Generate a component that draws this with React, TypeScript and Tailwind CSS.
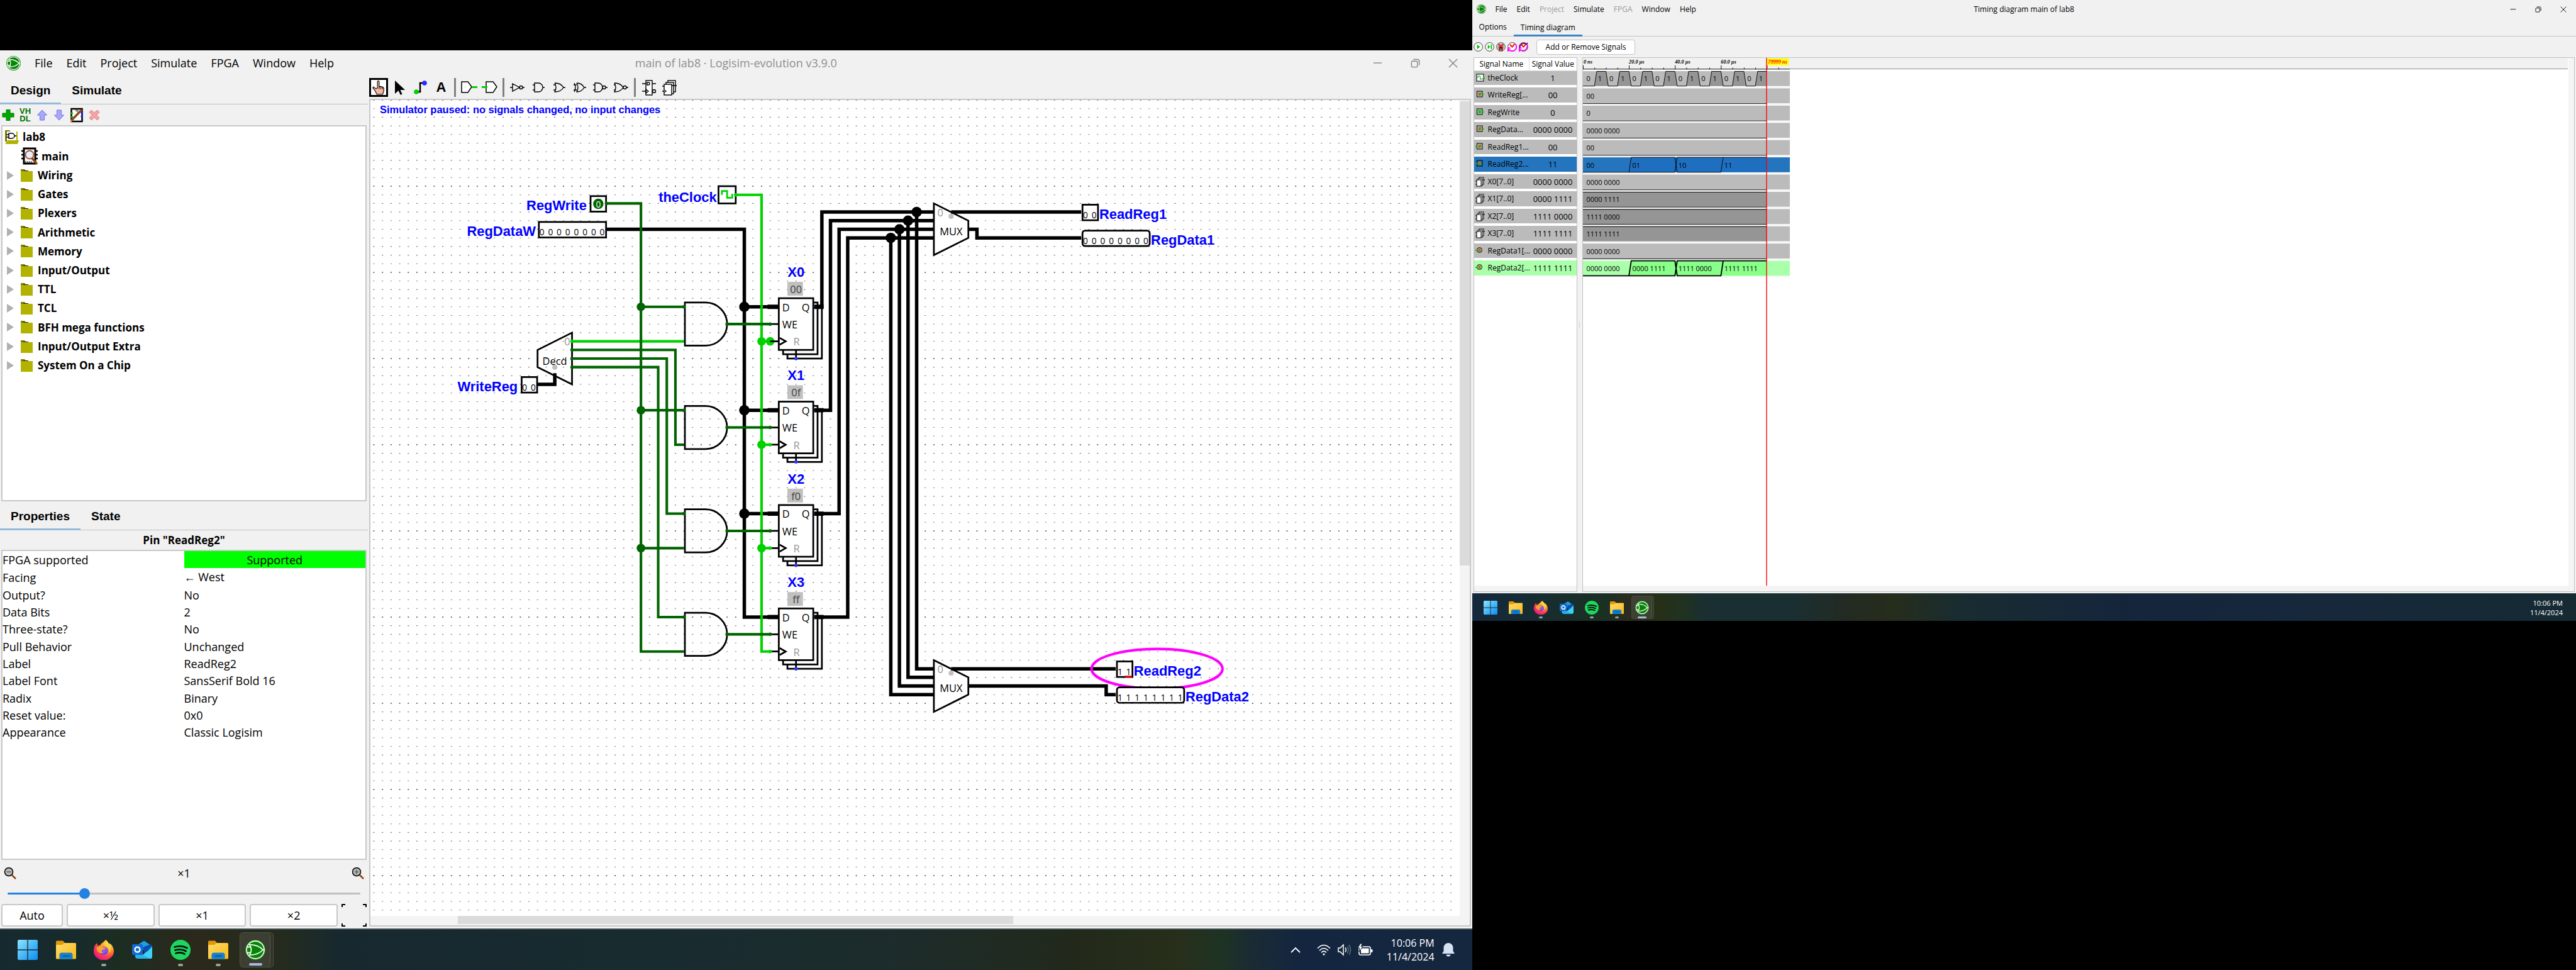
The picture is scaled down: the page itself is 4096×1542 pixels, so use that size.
import React from 'react';

/* ---------- shared icons ---------- */

function LogisimLogo({ className }: { className: string }) {
  return (
    <svg viewBox="0 0 32 32" className={className} aria-hidden="true">
      <circle cx="16" cy="16" r="16" fill="#128a12" />
      <circle cx="16" cy="16" r="14" fill="#078407" stroke="#e9f5e6" strokeWidth="1.8" />
      <path d="M7 8 Q12 16 7 24 Q20 24.5 28 16 Q20 7.5 7 8 Z M2 11.5 H8 M2 20.5 H8 M28 16 H31" fill="none" stroke="#f2faf0" strokeWidth="1.8" />
    </svg>
  );
}

function WindowsIcon({ className }: { className: string }) {
  return (
    <svg viewBox="0 0 32 32" className={className} aria-hidden="true">
      <defs>
        <linearGradient id="winGrad" x1="0" y1="0" x2="1" y2="1">
          <stop offset="0" stopColor="#8be4ff" />
          <stop offset="1" stopColor="#0a8df0" />
        </linearGradient>
      </defs>
      <path d="M0 2a2 2 0 0 1 2-2h13.3v15.3H0z M16.7 0H30a2 2 0 0 1 2 2v13.3H16.7z M0 16.7h15.3V32H2a2 2 0 0 1-2-2z M16.7 16.7H32V30a2 2 0 0 1-2 2H16.7z" fill="url(#winGrad)" />
    </svg>
  );
}

function ExplorerIcon({ className }: { className: string }) {
  return (
    <svg viewBox="0 0 32 32" className={className} aria-hidden="true">
      <defs>
        <linearGradient id="foldGrad" x1="0" y1="0" x2="1" y2="1">
          <stop offset="0" stopColor="#ffdc6b" />
          <stop offset="1" stopColor="#fbb915" />
        </linearGradient>
      </defs>
      <path d="M0 3a1.500 1.500 0 0 1 1.500-1.500H11L14 5V12H0z" fill="#e09a08" />
      <path d="M0 8H10L13.500 5H30.500A1.500 1.500 0 0 1 32 6.500V29A1.500 1.500 0 0 1 30.500 30.500H1.500A1.500 1.500 0 0 1 0 29z" fill="url(#foldGrad)" />
      <path d="M5.500 30.500V24a3.500 3.500 0 0 1 3.500-3.500H23a3.500 3.500 0 0 1 3.500 3.500V30.500z" fill="#1481cf" />
      <rect x="10.500" y="25" width="11" height="1.600" rx="0.800" fill="#0a4f86" />
    </svg>
  );
}

function FirefoxIcon({ className }: { className: string }) {
  return (
    <svg viewBox="0 0 32 32" className={className} aria-hidden="true">
      <defs>
        <radialGradient id="ffGrad" cx="0.75" cy="0.15" r="0.95">
          <stop offset="0" stopColor="#fff44f" />
          <stop offset="0.4" stopColor="#ff9a26" />
          <stop offset="0.7" stopColor="#ff4050" />
          <stop offset="1" stopColor="#e31587" />
        </radialGradient>
        <radialGradient id="ffCore" cx="0.5" cy="0.4" r="0.7">
          <stop offset="0" stopColor="#a55cff" />
          <stop offset="1" stopColor="#5b3fd6" />
        </radialGradient>
      </defs>
      <path d="M19 0c4 3 5 6 6 8 0-1 0-2-.3-3C29 8 32 13 32 18a16 14.500 0 0 1-32 0C0 12 2 8 5 5l1.500 5c1-1 2.500-1.600 4-1.600C12 5 16 4 19 0z" fill="url(#ffGrad)" />
      <circle cx="16" cy="17.500" r="6.800" fill="url(#ffCore)" />
      <path d="M4.500 13c3-3 7-3 9.500-1.500 2 1.200 3.500 1 5 1-1 3-4 2.500-5.500 3.500-1.500 1.300-.5 4 2 5-6 1.500-11-2.500-11-8z" fill="#ffa22b" />
      <path d="M20 8c5 3 6 9 3 13 6-3 6-12-3-13z" fill="#ffd43a" />
    </svg>
  );
}

function OutlookIcon({ className }: { className: string }) {
  return (
    <svg viewBox="0 0 32 32" className={className} aria-hidden="true">
      <path d="M6 10 19 1.500 32 10V16H6z" fill="#1d9fe8" />
      <path d="M17 12 29 7 32 10 20 22z" fill="#0b4fa8" />
      <path d="M32 12V27a3 3 0 0 1-3 3H9z" fill="#3fd0fa" />
      <path d="M5 18 29 30H9a4 4 0 0 1-4-4z" fill="#27b3ee" />
      <rect x="0" y="7" width="17" height="17" rx="2" fill="#0f6cd4" />
      <circle cx="8.500" cy="15.500" r="4" fill="none" stroke="#fff" strokeWidth="2.400" />
    </svg>
  );
}

function SpotifyIcon({ className }: { className: string }) {
  return (
    <svg viewBox="0 0 32 32" className={className} aria-hidden="true">
      <circle cx="16" cy="16" r="16" fill="#1ed760" />
      <path d="M6.500 11.500Q17 8 26.500 13M7.500 16.500Q17 13.500 24.500 18M8.500 21.500Q16 19 22.500 22.500" fill="none" stroke="#06140b" strokeWidth="2.800" strokeLinecap="round" />
    </svg>
  );
}

function WindowControls({ className, icon }: { className: string; icon: string }) {
  const paths: [string, string][] = [
    ['Minimize', 'M1 7.500H15'],
    ['Restore', 'M3 4.500H10A1.500 1.500 0 0 1 11.500 6V13A1.500 1.500 0 0 1 10 14.500H3A1.500 1.500 0 0 1 1.500 13V6A1.500 1.500 0 0 1 3 4.500ZM4.500 1.500H12A2.500 2.500 0 0 1 14.500 4V11.500'],
    ['Close', 'M1 1L15 15M15 1L1 15'],
  ];
  return (
    <div className="flex h-full">
      {paths.map(([name, d]) => (
        <button key={name} aria-label={name} className={className}>
          <svg viewBox="0 0 16 16" className={icon}>
            <path d={d} fill="none" stroke="currentColor" strokeWidth="1.4" />
          </svg>
        </button>
      ))}
    </div>
  );
}

/* ---------- explorer pane ---------- */

const libraries = ['Wiring', 'Gates', 'Plexers', 'Arithmetic', 'Memory', 'Input/Output', 'TTL', 'TCL', 'BFH mega functions', 'Input/Output Extra', 'System On a Chip'];

const attributes: [string, React.ReactNode][] = [
  ['Facing', <><span className="font-['Liberation_Sans',sans-serif]">←</span> West</>],
  ['Output?', 'No'],
  ['Data Bits', '2'],
  ['Three-state?', 'No'],
  ['Pull Behavior', 'Unchanged'],
  ['Label', 'ReadReg2'],
  ['Label Font', 'SansSerif Bold 16'],
  ['Radix', 'Binary'],
  ['Reset value:', '0x0'],
  ['Appearance', 'Classic Logisim'],
];

function Tabs({ first, second }: { first: string; second: string }) {
  return (
    <div className="flex h-[46px] shrink-0 border-b border-[#c0c0c0] font-['Liberation_Sans',sans-serif] text-[19px] font-bold">
      <button className="-mb-px border-b-3 border-[#97b9dc] px-[17px] pt-1.5">{first}</button>
      <button className="px-[17px] pt-1">{second}</button>
    </div>
  );
}

function ExplorerTools() {
  return (
    <div className="flex h-[33px] shrink-0 items-center gap-[7px] pl-[3px]">
      <button aria-label="Add circuit">
        <svg viewBox="0 0 20 20" className="size-5"><path d="M7 1.500h6v5.500h6v6h-6v5.500H7V13H1V7h6z" fill="#00a800" stroke="#007800" /></svg>
      </button>
      <button aria-label="Add VHDL" className="w-5 text-center font-['Liberation_Sans',sans-serif] text-[13px] leading-3 font-bold text-[#007000]">
        VH<br />DL
      </button>
      <button aria-label="Move up">
        <svg viewBox="0 0 20 20" className="size-5"><path d="M10 2l7.500 8h-4v8h-7v-8h-4z" fill="#a8a8ff" stroke="#7272dc" /></svg>
      </button>
      <button aria-label="Move down">
        <svg viewBox="0 0 20 20" className="size-5"><path d="M10 18l7.500-8h-4V2h-7v8h-4z" fill="#a8a8ff" stroke="#7272dc" /></svg>
      </button>
      <button aria-label="Edit appearance">
        <svg viewBox="0 0 22 24" className="h-6 w-[22px]">
          <rect x="2.500" y="2" width="17" height="20" fill="#fff" stroke="#000" strokeWidth="2.500" />
          <path d="M7 3h8l-3 5z" fill="#888" />
          <circle cx="3.500" cy="9" r="1.800" fill="#00c000" /><circle cx="3.500" cy="15" r="1.800" fill="#00c000" />
          <circle cx="19" cy="8" r="1.800" fill="#2020ff" /><circle cx="19" cy="14" r="1.800" fill="#2020ff" />
          <path d="M2 21L19 3.500" stroke="#8b4a1a" strokeWidth="3.500" /><path d="M0 23.500l1.200-4 2.800 2.500z" fill="#e8b080" />
        </svg>
      </button>
      <button aria-label="Remove">
        <svg viewBox="0 0 20 20" className="size-5"><path d="M5.500 2L10 6.500 14.500 2 18 5.500 13.500 10 18 14.500 14.500 18 10 13.500 5.500 18 2 14.500 6.500 10 2 5.500z" fill="#f4a4a4" stroke="#e07878" /></svg>
      </button>
    </div>
  );
}

function LibraryTree() {
  return (
    <ul className="grid h-[395px] auto-rows-fr pt-[2px] text-[17px] font-bold">
      <li className="flex items-center gap-1.5 pl-1">
        <svg viewBox="0 0 22 22" className="size-[22px]">
          <path d="M0 0h7l2 2h-6v16H0z" fill="#807c00" /><rect x="3" y="3" width="15" height="14" fill="#fff" />
          <path d="M6 5h5a4 4 0 0 1 0 8H6zM2 7h4M2 11h4M15 9h3" fill="none" stroke="#000" strokeWidth="1.500" />
          <path d="M18 2h2v15h-2z" fill="#b2b200" /><path d="M4 16h18l-2 6H0z" fill="#b2b200" />
        </svg>
        lab8
      </li>
      <li className="flex items-center gap-1.5 pl-[30px]">
        <svg viewBox="0 0 26 28" className="h-7 w-[26px]">
          <rect x="4" y="2" width="18" height="24" fill="#fff" stroke="#000" strokeWidth="3" />
          <path d="M0 6h4M0 12h4M0 18h4M22 6h4M22 12h4M22 18h4" stroke="#000" strokeWidth="2.500" />
          <path d="M7 22v4M10 22v4M13 22v4M16 22v4" stroke="#000" />
          <circle cx="13" cy="12" r="6.500" fill="#ececff" stroke="#a0562a" strokeWidth="1.800" />
          <path d="M17 17.500L25 27" stroke="#8b4513" strokeWidth="3.500" />
        </svg>
        main
      </li>
      {libraries.map((name) => (
        <li key={name} className="flex items-center pl-[7px]">
          <svg viewBox="0 0 11 14" className="h-3.5 w-[11px]"><path d="M0 0L11 7L0 14z" fill="#b0b0b0" /></svg>
          <svg viewBox="0 0 19 20" className="mr-2 ml-[11px] h-5 w-[19px]">
            <path d="M0 0h6l3 3H0z" fill="#807c00" /><path d="M4 2.500h8" stroke="#222" /><rect y="3" width="19" height="17" fill="#b2b200" />
          </svg>
          {name}
        </li>
      ))}
    </ul>
  );
}

function Magnifier({ plus }: { plus: boolean }) {
  return (
    <svg viewBox="0 0 20 20" className="size-5">
      <circle cx="8" cy="8" r="6.500" fill="#b8b8b8" stroke="#000" strokeWidth="1.500" />
      <path d={plus ? 'M4.500 8h7M8 4.500v7' : 'M4.500 8h7'} stroke="#444" strokeWidth="1.200" />
      <path d="M13 13l6 6" stroke="#8b4513" strokeWidth="2.500" />
    </svg>
  );
}

function Sidebar() {
  return (
    <aside className="flex w-[585px] shrink-0 flex-col">
      <Tabs first="Design" second="Simulate" />
      <ExplorerTools />
      <div className="mr-[2px] ml-[2px] shrink grow-[599] basis-0 overflow-hidden border-2 border-[#c8c8c8] bg-white">
        <LibraryTree />
      </div>
      <Tabs first="Properties" second="State" />
      <h2 className="flex h-[31px] shrink-0 items-center justify-center text-[17px] font-bold">Pin "ReadReg2"</h2>
      <div className="mr-[2px] ml-[2px] grow-[493] basis-0 overflow-hidden border-2 border-[#c8c8c8] bg-white">
        <table className="h-[302px] w-full table-fixed text-left text-lg leading-6">
          <tbody>
            <tr>
              <th className="font-normal">FPGA supported</th>
              <td className="bg-[#00ff00] text-center">Supported</td>
            </tr>
            {attributes.map(([name, value], i) => (
              <tr key={i}>
                <th className="font-normal">{name}</th>
                <td>{value}</td>
              </tr>
            ))}
          </tbody>
        </table>
      </div>
      <div className="flex h-[41px] shrink-0 items-center justify-between px-1.5 text-lg">
        <button aria-label="Zoom out"><Magnifier plus={false} /></button>
        <span>×1</span>
        <button aria-label="Zoom in"><Magnifier plus /></button>
      </div>
      <div className="flex h-[25px] shrink-0 items-center pr-3 pl-3">
        <input
          type="range"
          aria-label="Zoom"
          defaultValue={21}
          className="h-[3px] w-full appearance-none rounded bg-[linear-gradient(to_right,#2382e0_21%,#c0c0c0_21%)] [&::-webkit-slider-thumb]:size-[17px] [&::-webkit-slider-thumb]:appearance-none [&::-webkit-slider-thumb]:rounded-full [&::-webkit-slider-thumb]:bg-[#2382e0]"
        />
      </div>
      <div className="mt-1 mb-[3px] grid h-9 shrink-0 grid-cols-[98px_1fr_1fr_1fr_40px] gap-1.5 pr-[2px] pl-[2px] text-lg">
        {['Auto', '×½', '×1', '×2'].map((label) => (
          <button key={label} className="rounded border-2 border-[#c8c8c8] bg-white leading-none">{label}</button>
        ))}
        <button aria-label="Zoom to fit">
          <svg viewBox="0 0 40 36" className="h-9 w-10"><path d="M1 5V1H6M34 1H39V5M1 31V35H6M34 35H39V31" fill="none" stroke="#000" strokeWidth="2" /></svg>
        </button>
      </div>
    </aside>
  );
}

/* ---------- circuit tools ---------- */

const gateTools: [string, string][] = [
  ['NOT gate', 'M0 12H4M4 6L15 12L4 18ZM20 12H23M15 12a2.500 2.500 0 1 0 5 0a2.500 2.500 0 1 0 -5 0'],
  ['AND gate', 'M3 8H6M3 16H6M6 5H12A7 7 0 0 1 12 19H6ZM19 12H22'],
  ['OR gate', 'M3 8H7M3 16H7M5 5Q9 12 5 19Q15 19 19 12Q15 5 5 5M19 12H22'],
  ['XOR gate', 'M3 5Q7 12 3 19M7 5Q11 12 7 19Q15 19 19 12Q15 5 7 5M2 8H7M2 16H7M19 12H22'],
  ['NAND gate', 'M0 8H3M0 16H3M3 5H8A7 7 0 0 1 8 19H3ZM20 12H23M15 12a2.500 2.500 0 1 0 5 0a2.500 2.500 0 1 0 -5 0'],
  ['NOR gate', 'M0 8H3M0 16H3M1 5Q5 12 1 19Q11 19 15 12Q11 5 1 5M20 12H23M15 12a2.500 2.500 0 1 0 5 0a2.500 2.500 0 1 0 -5 0'],
];

function ToolButton({ label, children }: { label: string; children: React.ReactNode }) {
  return (
    <button aria-label={label} className="flex w-[33px] items-center justify-center">
      <svg viewBox="0 0 24 24" className="size-6 overflow-visible">{children}</svg>
    </button>
  );
}

function ToolDivider() {
  return <span className="mx-1 h-[30px] w-[3px] bg-[#808080]" />;
}

function CircuitToolbar() {
  return (
    <div className="flex h-[37px] shrink-0 items-center pl-px">
      <button aria-label="Poke tool" className="mr-[2px] ml-px flex size-[30px] items-center justify-center border-3 border-black bg-white">
        <svg viewBox="0 0 24 26" className="h-6 w-[22px]">
          <path d="M10 14V3a1.500 1.500 0 0 1 3 0v9l2-1 2 1 2 0 2 2v5l-2 6H9l-3-6-4-5 1-2 4 3z" fill="#f4b8a0" stroke="#000" strokeWidth="1.200" />
          <path d="M13 12v4M16 12v4M19 13v3" stroke="#000" />
        </svg>
      </button>
      <ToolButton label="Edit tool"><path d="M4 1V22L9.500 17L13 24L15.500 22.500L12.500 16H20Z" fill="#000" /></ToolButton>
      <ToolButton label="Wiring tool">
        <path d="M5 19H11V5H18" fill="none" stroke="#000" strokeWidth="2.500" />
        <circle cx="5" cy="19" r="3.800" fill="#00d200" /><circle cx="18" cy="5" r="3.800" fill="#2828ff" />
      </ToolButton>
      <button aria-label="Text tool" className="w-[33px] text-center font-['Liberation_Sans',sans-serif] text-[22px] font-bold">A</button>
      <ToolDivider />
      <ToolButton label="Input pin"><path d="M0 3H10L16 11L10 20H0Z" fill="#fff" stroke="#000" strokeWidth="1.500" /><path d="M16 11.500H25" stroke="#00d200" strokeWidth="3" /></ToolButton>
      <ToolButton label="Output pin"><path d="M6 3H17L23 11L17 20H6Z" fill="#fff" stroke="#000" strokeWidth="1.500" /><path d="M-1 11.500H8" stroke="#00d200" strokeWidth="3" /></ToolButton>
      <ToolDivider />
      {gateTools.map(([label, d]) => (
        <ToolButton key={label} label={label}><path d={d} fill="none" stroke="#000" strokeWidth="1.400" /></ToolButton>
      ))}
      <ToolDivider />
      <ToolButton label="D flip-flop">
        <rect x="7" y="1" width="10" height="23" fill="#fff" stroke="#000" strokeWidth="1.400" />
        <path d="M1 6H7M17 6H23M1 18H7M7 15L11 18L7 21ZM9 4h2a2 2 0 0 1 0 4H9z" fill="none" stroke="#000" strokeWidth="1.400" />
        <circle cx="20" cy="18" r="2.500" fill="none" stroke="#000" strokeWidth="1.400" />
      </ToolButton>
      <ToolButton label="Register">
        <g fill="#fff" stroke="#000" strokeWidth="1.400">
          <rect x="9" y="1" width="12" height="18" /><rect x="6" y="4" width="12" height="18" /><rect x="3" y="7" width="12" height="17" />
          <path d="M0 10H3M0 18H3M3 16L6 18L3 20M15 9H23" />
        </g>
      </ToolButton>
    </div>
  );
}

/* ---------- circuit ---------- */

const BLACK = '#000000';
const LOW = '#006400';
const HIGH = '#00d200';

const gridRows = Array.from({ length: 95 }, (_, i) => i);

const buses = [
  'M270 150H430V600H470', 'M430 240H470', 'M430 360H470', 'M430 480H470',
  'M510 240H520V130H650', 'M510 360H530V140H650', 'M510 480H540V150H650', 'M510 600H550V160H650',
  'M630 130V660H650', 'M620 140V670H650', 'M610 150V680H650', 'M600 160V690H650',
  'M670 130H821', 'M690 150H700V160H821', 'M670 660H861', 'M690 680H850V690H861',
  'M190 330H210V317',
];

const lowWires = [
  'M270 120H310V640H360', 'M310 240H360', 'M310 360H360', 'M310 520H360',
  'M230 290H350V400H360', 'M230 300H340V480H360', 'M230 310H330V600H360',
  'M410 260H460', 'M410 380H460', 'M410 500H460', 'M410 620H460',
];

const highWires = ['M420 110H450V640H460', 'M450 280H460', 'M450 400H460', 'M450 520H460', 'M230 280H360'];

const busDots = [[430, 240], [430, 360], [430, 480], [630, 130], [620, 140], [610, 150], [600, 160]];
const lowDots = [[310, 240], [310, 360], [310, 520]];
const highDots = [[450, 280], [460, 280], [450, 400], [450, 520]];

const registers: [string, string, number][] = [['X0', '00', 0], ['X1', '0f', 120], ['X2', 'f0', 240], ['X3', 'ff', 360]];

const labelClass = "fill-[#0000ff] font-['Liberation_Sans',sans-serif] text-[16px] font-bold";
const smallClass = "font-['Open_Sans',sans-serif] text-[12px]";
const bitClass = "font-['Open_Sans',sans-serif] text-[10px]";

function Bits({ value, x, y }: { value: string; x: number; y: number }) {
  return (
    <g className={bitClass} textAnchor="middle">
      {value.split('').map((bit, i) => (
        <text key={i} x={x + 5 + i * 10} y={y + 17}>{bit}</text>
      ))}
    </g>
  );
}

function Pin({ value, x, y, round = 0 }: { value: string; x: number; y: number; round?: number }) {
  return (
    <g>
      <rect x={x + 1.5} y={y + 1.5} width={value.length * 10 - 2} height="18" rx={round} fill="#fff" stroke="#000" strokeWidth="2" />
      <Bits value={value} x={x} y={y} />
    </g>
  );
}

function Register({ name, value, dy }: { name: string; value: string; dy: number }) {
  return (
    <g transform={`translate(0 ${dy})`}>
      <text x="490" y="205" textAnchor="middle" className={labelClass}>{name}</text>
      <rect x="480" y="211" width="18" height="16" fill="#c0c0c0" />
      <text x="490" y="224" textAnchor="middle" fill="#404040" className={smallClass}>{value}</text>
      <g fill="#fff" stroke="#000" strokeWidth="2">
        <rect x="480" y="240" width="40" height="60" />
        <rect x="475" y="235" width="40" height="60" />
        <rect x="470" y="230" width="40" height="60" />
        <path d="M460 260H470M460 280H470M471 276L478 280L471 284M490 290V300" fill="none" />
      </g>
      <path d="M457 240H470M511 240H522" stroke="#000" strokeWidth="5" />
      <circle cx="490" cy="300" r="2" fill="#3232ff" />
      <g className={smallClass}>
        <text x="474" y="245">D</text>
        <text x="506" y="245" textAnchor="end">Q</text>
        <text x="474" y="265">WE</text>
        <text x="487" y="285" fill="#969696">R</text>
      </g>
    </g>
  );
}

function Mux({ y }: { y: number }) {
  return (
    <g transform={`translate(650 ${y})`}>
      <path d="M0 0L40 20V40L0 60Z" fill="#fff" stroke="#000" strokeWidth="2" />
      <circle cx="20" cy="15" r="3" fill="#c0c0c0" />
      <text x="4" y="15" fill="#969696" className={smallClass}>0</text>
      <text x="20" y="37" textAnchor="middle" className={smallClass}>MUX</text>
    </g>
  );
}

function CircuitCanvas() {
  return (
    <svg viewBox="-4 0 1264 947" preserveAspectRatio="xMinYMin slice" className="h-full w-full bg-white" role="img" aria-label="Circuit main">
      <g stroke="#707070">
        {gridRows.map((i) => (
          <path key={i} d={`M-0.700 ${i * 10}H1258`} strokeWidth={i % 10 === 0 ? 1.4 : 0.8} strokeDasharray="1.400 8.600" />
        ))}
      </g>
      <Mux y={120} />
      <Mux y={650} />
      <g fill="none" stroke={BLACK} strokeWidth="4">{buses.map((d) => <path key={d} d={d} />)}</g>
      <g fill="none" stroke={HIGH} strokeWidth="3">{highWires.map((d) => <path key={d} d={d} />)}</g>
      <g fill="none" stroke={LOW} strokeWidth="3">{lowWires.map((d) => <path key={d} d={d} />)}</g>
      {[0, 120, 240, 360].map((dy) => (
        <path key={dy} d={`M361 ${235 + dy}H385A25 25 0 0 1 385 ${285 + dy}H361Z`} fill="none" stroke="#000" strokeWidth="2" />
      ))}
      <path d="M230 270V330L190 310V290Z" fill="none" stroke="#000" strokeWidth="2" />
      <circle cx="210" cy="310" r="3" fill="#c0c0c0" />
      <text x="221" y="285" fill="#969696" className={smallClass}>0</text>
      <text x="210" y="307" textAnchor="middle" className={smallClass}>Decd</text>
      {busDots.map(([x, y]) => <circle key={`${x}-${y}`} cx={x} cy={y} r="6" fill={BLACK} />)}
      {lowDots.map(([x, y]) => <circle key={`${x}-${y}`} cx={x} cy={y} r="5" fill={LOW} />)}
      {highDots.map(([x, y]) => <circle key={`${x}-${y}`} cx={x} cy={y} r="5" fill={HIGH} />)}
      {registers.map(([name, value, dy]) => <Register key={name} name={name} value={value} dy={dy} />)}
      <g fill={LOW}>
        {[0, 120, 240, 360].map((dy) => (
          <g key={dy}>
            <circle cx="410" cy={260 + dy} r="2" /><circle cx="460" cy={260 + dy} r="2" />
            <circle cx="360" cy={240 + dy} r="2" />
          </g>
        ))}
        <circle cx="230" cy="290" r="2" /><circle cx="230" cy="300" r="2" /><circle cx="230" cy="310" r="2" />
      </g>
      <g fill={HIGH}>
        <circle cx="230" cy="280" r="2" /><circle cx="460" cy="400" r="2" /><circle cx="460" cy="520" r="2" /><circle cx="460" cy="640" r="2" />
      </g>

      <rect x="251.5" y="111.5" width="18" height="18" fill="#fff" stroke="#000" strokeWidth="2" />
      <circle cx="260.500" cy="120.500" r="6" fill={LOW} />
      <text x="260.500" y="125" textAnchor="middle" fill="#fff" className={bitClass}>0</text>
      <circle cx="270" cy="120" r="2" fill={LOW} />
      <rect x="400" y="100" width="20" height="20" fill="#fff" stroke="#000" strokeWidth="2" />
      <path d="M404 110V105.500H410V113.500H416V109" fill="none" stroke={HIGH} strokeWidth="2" />
      <circle cx="420" cy="110" r="2" fill={HIGH} />
      <ellipse cx="909" cy="660" rx="76" ry="23" fill="none" stroke="#ff00ff" strokeWidth="3" />
      <Pin value="00000000" x={190} y={140} />
      <Pin value="00" x={170} y={320} />
      <Pin value="00" x={821} y={120} />
      <Pin value="11" x={861} y={650} />
      <rect x="872" y="668" width="8" height="2" fill="#f00" />
      <Pin value="00000000" x={821} y={150} round={3} />
      <Pin value="11111111" x={861} y={680} round={3} />

      <g className={labelClass}>
        <text x="247" y="128" textAnchor="end">RegWrite</text>
        <text x="188" y="158" textAnchor="end">RegDataW</text>
        <text x="398" y="118" textAnchor="end">theClock</text>
        <text x="167" y="338" textAnchor="end">WriteReg</text>
        <text x="842" y="138">ReadReg1</text>
        <text x="902" y="168">RegData1</text>
        <text x="882" y="668">ReadReg2</text>
        <text x="942" y="698">RegData2</text>
      </g>
      <text x="7" y="15" className="fill-[#0000ff] font-['Liberation_Sans',sans-serif] text-[12px] font-bold">
        Simulator paused: no signals changed, no input changes
      </text>
    </svg>
  );
}

/* ---------- task bars ---------- */

const apps = [
  { name: 'Start', Icon: WindowsIcon, running: false },
  { name: 'File Explorer', Icon: ExplorerIcon, running: false },
  { name: 'Firefox', Icon: FirefoxIcon, running: true },
  { name: 'Outlook', Icon: OutlookIcon, running: false },
  { name: 'Spotify', Icon: SpotifyIcon, running: true },
  { name: 'Downloads', Icon: ExplorerIcon, running: true },
];

function MainTaskbar() {
  return (
    <footer className="flex h-[66px] shrink-0 items-center justify-between border-t-2 border-[#3f4d50] bg-[linear-gradient(to_right,#15292f_0%,#172b2c_5%,#1b2d22_8%,#2b291b_13%,#252b1d_19%,#17292f_23%,#182b2f_45%,#1c2c2c_60%,#22291b_73%,#272f1a_80%,#1e3323_83%,#1a2b34_85%,#14263f_88%,#15263f_100%)] text-white">
      <nav className="ml-3.5 grid h-full w-[424px] grid-cols-7">
        {apps.map(({ name, Icon, running }) => (
          <button key={name} aria-label={name} className="relative flex items-center justify-center">
            <Icon className="size-8" />
            {running && <span className="absolute bottom-1.5 h-1 w-2 rounded-full bg-[#9a9f9c]" />}
          </button>
        ))}
        <button aria-label="Logisim" className="relative my-1 ml-1 flex w-[54px] rounded-md border border-white/15 bg-white/5">
          <span className="flex h-full w-12 items-center justify-center rounded-md border-r border-white/15 bg-white/5">
            <LogisimLogo className="size-8" />
          </span>
          <span className="absolute bottom-0.5 left-[14px] h-1 w-[21px] rounded-full bg-[#a9b8dc]" />
        </button>
      </nav>
      <div className="flex items-center pr-7">
        <button aria-label="Show hidden icons"><svg viewBox="0 0 16 10" className="h-2.5 w-4"><path d="M1 9L8 2L15 9" fill="none" stroke="#fff" strokeWidth="1.800" /></svg></button>
        <svg viewBox="0 0 22 18" className="ml-[26px] h-[18px] w-[22px]" fill="none" stroke="#fff" strokeWidth="1.600">
          <path d="M1 6.500Q11-3.500 21 6.500M4 10Q11 3 18 10M7 13.200Q11 9 15 13.200" /><circle cx="11" cy="16" r="1.600" fill="#fff" stroke="none" />
        </svg>
        <svg viewBox="0 0 22 20" className="ml-[11px] h-5 w-[22px]" fill="none" stroke="#fff" strokeWidth="1.500">
          <path d="M1 7H4L9 2V18L4 13H1ZM12 6.500Q14.500 10 12 13.500" /><path d="M15 4.500Q19 10 15 15.500M18 2Q23 10 18 18" stroke="#5c6c80" />
        </svg>
        <svg viewBox="0 0 24 20" className="ml-2.5 h-5 w-6">
          <rect x="2" y="5" width="18" height="13" rx="2.500" fill="none" stroke="#fff" strokeWidth="1.600" /><rect x="5" y="7.500" width="12.500" height="8" fill="#fff" />
          <rect x="21" y="9" width="2.500" height="5" rx="1" fill="#fff" /><path d="M4 0L0 7H3L2 13L8 5H5L7 0Z" fill="#fff" stroke="#15263f" />
        </svg>
        <time className="ml-[22px] text-right text-base leading-[22px]">10:06 PM<br />11/4/2024</time>
        <button aria-label="Notifications" className="ml-3">
          <svg viewBox="0 0 20 24" className="h-6 w-5"><path d="M10 1a7.500 7.500 0 0 1 7.500 7.500V14L20 18H0L2.500 14V8.500A7.500 7.500 0 0 1 10 1ZM6.500 19.500h7a3.500 3 0 0 1-7 0z" fill="#d4e2f4" /></svg>
        </button>
      </div>
    </footer>
  );
}

function SecondTaskbar() {
  return (
    <footer className="flex min-h-0 items-center justify-between border-t border-[#2c4448] bg-[linear-gradient(to_right,#15273d_0%,#162c33_5%,#1a3022_12%,#2b2b20_14%,#262f18_17%,#20321f_19%,#1a2f31_21%,#1a2f31_29%,#232a22_34%,#262d1b_38%,#192c30_44%,#14253c_60%,#16283a_78%,#152a33_100%)] text-white">
      <nav className="ml-[9px] grid h-full w-[282px] grid-cols-7">
        {apps.map(({ name, Icon, running }) => (
          <button key={name} aria-label={name} className="relative flex items-center justify-center">
            <Icon className="size-[22px]" />
            {running && <span className="absolute bottom-1 h-[3px] w-1.5 rounded-full bg-[#9a9f9c]" />}
          </button>
        ))}
        <button aria-label="Logisim" className="relative my-[3px] ml-[3px] flex w-9 rounded border border-white/10 bg-white/5">
          <span className="flex h-full w-8 items-center justify-center rounded border-r border-white/10 bg-white/5">
            <LogisimLogo className="size-[22px]" />
          </span>
          <span className="absolute bottom-0 left-[9px] h-[3px] w-3.5 rounded-full bg-[#a9b8dc]" />
        </button>
      </nav>
      <time className="pr-[21px] text-right text-[11px] leading-[15px]">10:06 PM<br />11/4/2024</time>
    </footer>
  );
}

/* ---------- timing window ---------- */

type Kind = 'clock' | 'in' | 'bit' | 'out' | 'reg' | 'probe';

const signals: { name: string; value: string; kind: Kind; row: string }[] = [
  { name: 'theClock', value: '1', kind: 'clock', row: 'bg-[#bbbbbb]' },
  { name: 'WriteReg[...', value: '00', kind: 'in', row: 'bg-[#bbbbbb]' },
  { name: 'RegWrite', value: '0', kind: 'bit', row: 'bg-[#bbbbbb]' },
  { name: 'RegData...', value: '0000 0000', kind: 'in', row: 'bg-[#bbbbbb]' },
  { name: 'ReadReg1...', value: '00', kind: 'out', row: 'bg-[#bbbbbb]' },
  { name: 'ReadReg2...', value: '11', kind: 'out', row: 'bg-[#2575be]' },
  { name: 'X0[7..0]', value: '0000 0000', kind: 'reg', row: 'bg-[#bbbbbb]' },
  { name: 'X1[7..0]', value: '0000 1111', kind: 'reg', row: 'bg-[#bbbbbb]' },
  { name: 'X2[7..0]', value: '1111 0000', kind: 'reg', row: 'bg-[#bbbbbb]' },
  { name: 'X3[7..0]', value: '1111 1111', kind: 'reg', row: 'bg-[#bbbbbb]' },
  { name: 'RegData1[...', value: '0000 0000', kind: 'probe', row: 'bg-[#bbbbbb]' },
  { name: 'RegData2[...', value: '1111 1111', kind: 'probe', row: 'bg-[#aaffaa]' },
];

function SignalIcon({ kind }: { kind: Kind }) {
  return (
    <svg viewBox="0 0 16 16" className="size-4 shrink-0" fill="none">
      {kind === 'clock' && <><rect x="2" y="2" width="11" height="11" fill="#fff" stroke="#000" /><path d="M4 8V5H7.500V10H11V8" stroke="#00a000" /><path d="M13 8h2" stroke="#00d200" strokeWidth="2" /></>}
      {(kind === 'in' || kind === 'bit' || kind === 'out') && (
        <>
          <rect x="2.500" y="2" width="8.500" height="9" stroke="#000" />
          <rect x="4.500" y="4" width="4.500" height="5" fill={kind === 'bit' ? '#00d200' : '#c06a20'} />
          {kind !== 'bit' && <path d="M5 8.500h2M8.500 4v2" stroke="#00b000" strokeWidth="1.500" />}
          <path d={kind === 'out' ? 'M0 7h2.500' : 'M11 7h2.500'} stroke="#00d200" strokeWidth="2" />
        </>
      )}
      {kind === 'reg' && <g fill="#fff" stroke="#000"><rect x="6" y="1" width="7" height="11" /><rect x="4" y="3" width="7" height="11" /><rect x="2" y="5" width="7" height="10" /><path d="M0 7h2M0 12h2M11 5h4" /></g>}
      {kind === 'probe' && <><circle cx="6.500" cy="6.500" r="4" stroke="#000" /><rect x="4.500" y="4" width="4" height="5" fill="#c06a20" /><path d="M5.500 8h1.500" stroke="#00b000" strokeWidth="1.500" /><path d="M0 7h2.500" stroke="#00d200" strokeWidth="2" /></>}
    </svg>
  );
}

const rowTop = (i: number) => 23 + i * 30;
const minorTicks = Array.from({ length: 18 }, (_, i) => i * 20);
const clockPulses = Array.from({ length: 8 }, (_, i) => 20 + i * 40);
const steadyLow = [1, 2, 3, 4, 6, 10];

function Steps({ top, values, fill, width }: { top: number; values: string[]; fill: string; width: number }) {
  const bottom = top + 26;
  return (
    <g>
      <path d={`M80 ${bottom}L84 ${top}H320V${bottom}Z`} fill={fill} />
      <path d={`M0 ${bottom}H160L164 ${top}H320M80 ${bottom}L84 ${top}H160L164 ${bottom}H240L244 ${top}`} fill="none" stroke="#000" strokeWidth={width} />
      {values.map((v, i) => <text key={v} x={6 + i * 80} y={top + 18}>{v}</text>)}
    </g>
  );
}

function WaveForms() {
  return (
    <svg viewBox="0 0 360 918" preserveAspectRatio="xMinYMin meet" className="h-full w-[329px] shrink-0" role="img" aria-label="Signal wave forms">
      <rect y="20" width="360" height="900" fill="#fff" />
      <path d="M0 19.500H360" stroke="#000" />
      {minorTicks.map((x) => <path key={x} d={`M${x + 0.5} ${x % 80 === 0 ? 13 : 17}V20`} stroke="#000" />)}
      <g className="font-['Liberation_Serif',serif] text-[9px] font-bold italic">
        <text x="1" y="10">0 ns</text>
        <text x="80" y="10">20.0 µs</text>
        <text x="160" y="10">40.0 µs</text>
        <text x="240" y="10">60.0 µs</text>
        <rect x="320" y="1" width="38" height="12" fill="#ff0" />
        <text x="322" y="10" fill="#f00">79999 ns</text>
      </g>
      {signals.map((s, i) => (
        <g key={s.name}>
          <path d={`M0 ${rowTop(i) + 28}H360`} stroke="#ededed" />
          <rect y={rowTop(i)} width="360" height="26" fill={i === 5 ? '#2575be' : i === 11 ? '#aaffaa' : '#bbbbbb'} />
        </g>
      ))}
      <g className="font-['Open_Sans',sans-serif] text-[12px]">
        {clockPulses.map((x) => (
          <g key={x}>
            <path d={x === 300 ? `M${x} 49L${x + 4} 23H320V49Z` : `M${x} 49L${x + 4} 23H${x + 20}L${x + 24} 49Z`} fill="#959595" />
            <path d={x === 300 ? `M${x - 16} 49H${x}L${x + 4} 23.500H320` : `M${x === 20 ? 0 : x - 16} 49H${x}L${x + 4} 23.500H${x + 20}L${x + 24} 49`} fill="none" stroke="#000" />
            <text x={x - 14} y="41">0</text>
            <text x={x + 6} y="41">1</text>
          </g>
        ))}
        {steadyLow.map((i) => (
          <g key={i}>
            <path d={`M0 ${rowTop(i) + 26.5}H320`} stroke="#000" />
            <text x="6" y={rowTop(i) + 18}>{signals[i].value}</text>
          </g>
        ))}
        {[7, 8, 9].map((i) => (
          <g key={i}>
            <rect y={rowTop(i)} width="320" height="26" fill="#959595" />
            <path d={i === 9 ? `M0 ${rowTop(i) + 0.5}H320` : `M0 ${rowTop(i) + 0.5}H320M0 ${rowTop(i) + 26.5}H320`} stroke="#000" />
            <text x="6" y={rowTop(i) + 18}>{signals[i].value}</text>
          </g>
        ))}
        <Steps top={rowTop(5)} values={['00', '01', '10', '11']} fill="#1f6fc0" width={1} />
        <Steps top={rowTop(11)} values={['0000 0000', '0000 1111', '1111 0000', '1111 1111']} fill="#88ff88" width={2} />
      </g>
      <path d="M319.500 0V918" stroke="#f00" strokeWidth="1.500" />
    </svg>
  );
}

const simControls: [string, React.ReactNode][] = [
  ['Run', <path key="p" d="M6 4V12L11 8Z" fill="#00c000" />],
  ['Step', <path key="p" d="M5 4V12L9 8ZM10 4h2v8h-2z" fill="#00c000" />],
  ['Stop clock', <g key="p"><circle cx="8" cy="8" r="6" fill="#aaa" /><path d="M4 3L8 8L12 3" stroke="#f00" strokeWidth="2" fill="none" /><path d="M5 8h6v7H9v-4H7v4H5z" fill="#800000" /></g>],
  ['Half tick', <g key="p"><path d="M4 4L8 8L12 3" stroke="#f00" strokeWidth="2" fill="none" /><path d="M13 3A7 7 0 0 1 3 13L1 15V10H5" stroke="#f0f" strokeWidth="2" fill="none" /></g>],
  ['Full tick', <g key="p"><path d="M4 4L8 8L12 3" stroke="#f00" strokeWidth="2" fill="none" /><path d="M2 10A6.500 6.500 0 0 1 13 4L15 1" stroke="#800080" strokeWidth="2" fill="none" /><path d="M14 6A7 7 0 0 1 3 13L1 15V10H5" stroke="#f0f" strokeWidth="2" fill="none" /></g>],
];

function TimingWindow() {
  return (
    <section className="flex min-h-0 flex-col bg-[#f1f1f1] text-xs text-black">
      <header className="grid h-[29px] shrink-0 grid-cols-[1fr_auto_1fr] items-center">
        <nav className="flex items-center gap-[15px]">
          <LogisimLogo className="ml-[7px] size-[15px]" />
          {['File', 'Edit', 'Project', 'Simulate', 'FPGA', 'Window', 'Help'].map((item) => (
            <button key={item} disabled={item === 'Project' || item === 'FPGA'} className="disabled:text-[#9a9a9a]">{item}</button>
          ))}
        </nav>
        <h1>Timing diagram main of lab8</h1>
        <div className="flex h-full justify-end">
          <WindowControls className="flex w-10 items-center justify-center" icon="size-2.5" />
        </div>
      </header>
      <div className="flex h-[29px] shrink-0 border-b border-[#c0c0c0]">
        <button className="px-[11px]">Options</button>
        <button className="-mb-px border-b-3 border-[#3c83c5] px-[11px] pt-1">Timing diagram</button>
      </div>
      <div className="flex h-[33px] shrink-0 items-center gap-[3px] pl-[2px]">
        {simControls.map(([label, icon]) => (
          <button key={label} aria-label={label}>
            <svg viewBox="0 0 16 16" className="size-[15px]"><circle cx="8" cy="8" r="7.300" fill="#fff" stroke="#333" />{icon}</svg>
          </button>
        ))}
        <button className="ml-2.5 h-6 rounded border border-[#c4c4c4] bg-white px-3.5 leading-none">Add or Remove Signals</button>
      </div>
      <div className="flex min-h-0 flex-1 pr-0.5 pb-[2px] pl-[2px]">
        <div className="flex w-[165px] shrink-0 flex-col justify-between border border-[#c0c0c0] bg-white">
          <table className="h-[350px] w-full table-fixed">
            <thead>
              <tr className="h-5">
                <th className="w-[88px] border-r border-b border-[#dcdcdc] font-normal">Signal Name</th>
                <th className="border-b border-[#dcdcdc] font-normal whitespace-nowrap">Signal Value</th>
              </tr>
            </thead>
            <tbody>
              {signals.map((s) => (
                <tr key={s.name} className="border-b-4 border-white">
                  <td className={s.row}>
                    <span className="flex items-center gap-1 pl-0.5 leading-4 whitespace-nowrap"><SignalIcon kind={s.kind} />{s.name}</span>
                  </td>
                  <td className={s.row}><span className="block text-center text-[13px] leading-4">{s.value}</span></td>
                </tr>
              ))}
            </tbody>
          </table>
          <div className="h-[9px] bg-[#f4f4f4]" />
        </div>
        <div className="flex w-2 shrink-0 flex-col items-center justify-center gap-0.5">
          <span className="size-px bg-[#909090]" /><span className="size-px bg-[#909090]" /><span className="size-px bg-[#909090]" />
        </div>
        <div className="flex min-w-0 flex-1 flex-col border border-[#c0c0c0]">
          <div className="flex min-h-0 flex-1">
            <WaveForms />
            <div className="flex flex-1 flex-col">
              <div className="h-[18px] border-b border-[#909090]" />
              <div className="flex-1 bg-white" />
            </div>
            <div className="w-2.5 border-l border-white bg-[#f4f4f4]" />
          </div>
          <div className="h-[9px] bg-[#f4f4f4]" />
        </div>
      </div>
    </section>
  );
}

/* ---------- page ---------- */

export default function App() {
  return (
    <div className="grid h-screen w-full grid-cols-[4fr_3fr] overflow-hidden bg-black font-['Open_Sans',sans-serif] text-black">
      <div className="flex min-h-0 min-w-0 flex-col pt-20">
        <main className="flex min-h-0 flex-1 flex-col bg-[#f1f1f1]">
          <header className="grid h-10 shrink-0 grid-cols-[1fr_auto_1fr] items-center text-lg">
            <nav className="flex items-center gap-[22px]">
              <LogisimLogo className="ml-2.5 size-[23px]" />
              {['File', 'Edit', 'Project', 'Simulate', 'FPGA', 'Window', 'Help'].map((item) => <button key={item}>{item}</button>)}
            </nav>
            <h1 className="text-[#8e8e8e]">main of lab8 · Logisim-evolution v3.9.0</h1>
            <div className="flex h-full justify-end">
              <WindowControls className="flex w-[60px] items-center justify-center text-[#808080]" icon="size-[15px]" />
            </div>
          </header>
          <div className="flex min-h-0 flex-1">
            <Sidebar />
            <div className="flex min-w-0 flex-1 flex-col">
              <CircuitToolbar />
              <div className="mr-[2px] mb-[3px] ml-[2px] grid min-h-0 flex-1 grid-cols-[1fr_16px] grid-rows-[1fr_15px] border-2 border-[#c8c8c8] bg-[#f4f4f4]">
                <div className="min-h-0 min-w-0 overflow-hidden"><CircuitCanvas /></div>
                <div className="pt-0.5"><div className="h-[57%] bg-[#dbdbdb]" /></div>
                <div className="pb-0.5"><div className="ml-[8%] h-full w-[51%] bg-[#dbdbdb]" /></div>
              </div>
            </div>
          </div>
        </main>
        <MainTaskbar />
      </div>
      <div className="grid min-h-0 min-w-0 grid-rows-[943fr_44fr_555fr]">
        <TimingWindow />
        <SecondTaskbar />
      </div>
    </div>
  );
}
